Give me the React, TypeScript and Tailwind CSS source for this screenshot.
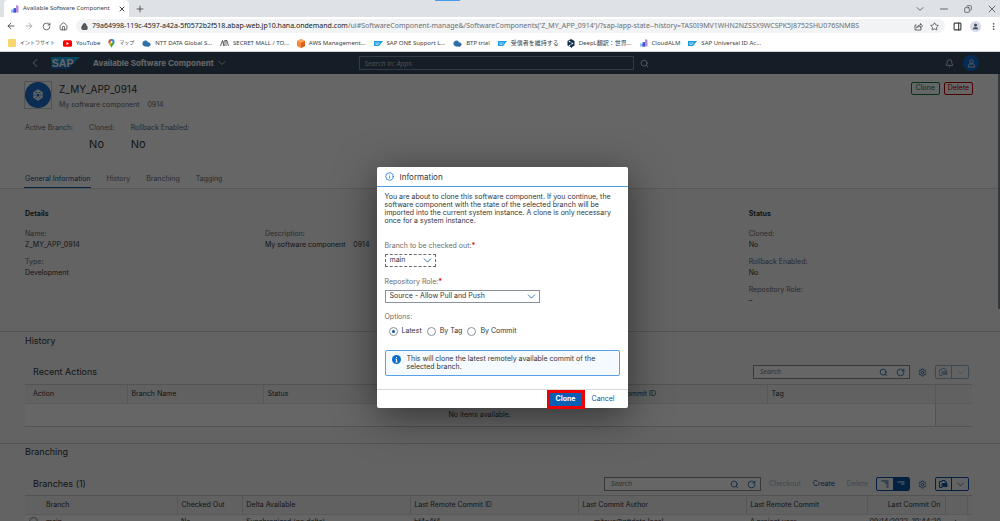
import type { ReactNode } from 'react';
import {
  ArrowLeft, ArrowRight, Bell, ChevronDown, ChevronLeft, ChevronRight, Cloud, Copy, EllipsisVertical,
  House, Info, Lock, Minus, PanelRight, Plus, RotateCw, Search, Settings, Star, User, X,
} from 'lucide-react';

const APP_FONT = "font-['Inter','Liberation_Sans',sans-serif]";
const CHROME_FONT = "font-['Noto_Sans','Noto_Sans_CJK_JP',sans-serif]";
const HINT_FONT = "font-['Open_Sans',sans-serif] italic";

function AlmIcon() {
  return (
    <svg viewBox="0 0 16 16" className="size-2 shrink-0">
      <path d="M0 9h5v6H0z" fill="#7cc4f5" />
      <path d="M5 6h5v9H5z" fill="#3f7fe0" />
      <path d="M10 0l5 2v13h-5z" fill="#b48be0" />
      <path d="M5 10l5-4v9H5z" fill="#4b4fc9" />
    </svg>
  );
}

function SapFlag() {
  return (
    <svg viewBox="0 0 18 10" className="h-[5px] w-[9px] shrink-0">
      <path d="M0 0h18l-8 10H0z" fill="#1a9be0" />
      <path d="M2 4h10M3 7h6" stroke="#fff" strokeWidth="1.2" />
    </svg>
  );
}

function CloudIcon() {
  return <Cloud className="size-[9px] shrink-0 fill-[#2f6fa8] text-[#2f6fa8]" />;
}

const BOOKMARKS: { label: string; icon: ReactNode; kana?: boolean }[] = [
  { label: 'イントラサイト', kana: true, icon: <span className="size-2 shrink-0 rounded-[1px] bg-[#f8d66d]" /> },
  {
    label: 'YouTube',
    icon: (
      <svg viewBox="0 0 18 13" className="h-[7px] w-[9px] shrink-0">
        <rect width="18" height="13" rx="3" fill="#f00" />
        <path d="M7 3.5v6l5-3z" fill="#fff" />
      </svg>
    ),
  },
  {
    label: 'マップ',
    kana: true,
    icon: (
      <svg viewBox="0 0 14 18" className="h-[9px] w-[7px] shrink-0">
        <path d="M7 18C6 13 1 11 1 6a6 6 0 0 1 12 0c0 5-5 7-6 12z" fill="#34a853" />
        <path d="M1 6a6 6 0 0 1 4-5.600L7 6 2 9z" fill="#ea4335" />
        <path d="M5 .4A6 6 0 0 1 13 6L7 6z" fill="#4285f4" />
        <path d="M2 9l5-3 1 2-4 5z" fill="#fbbc04" />
        <circle cx="7" cy="6" r="2" fill="#fff" />
      </svg>
    ),
  },
  { label: 'NTT DATA Global S...', icon: <CloudIcon /> },
  {
    label: 'SECRET MALL / TO...',
    icon: (
      <svg viewBox="0 0 18 12" className="h-[6px] w-[9px] shrink-0" fill="none" stroke="#333" strokeWidth="1.500">
        <path d="M1 12L5 1l3 11M8 12V2l4-1v11M12 1h2l3 11" />
      </svg>
    ),
  },
  {
    label: 'AWS Management...',
    icon: (
      <svg viewBox="0 0 16 18" className="h-[9px] w-2 shrink-0">
        <path d="M8 0l8 4v10l-8 4-8-4V4z" fill="#f58536" />
        <path d="M8 0l8 4-8 4-8-4z" fill="#fba55c" />
        <path d="M8 8l8-4v10l-8 4z" fill="#dd5f1c" />
      </svg>
    ),
  },
  { label: 'SAP ONE Support L...', icon: <SapFlag /> },
  { label: 'BTP trial', icon: <CloudIcon /> },
  { label: '受信者を維持する', icon: <SapFlag /> },
  {
    label: 'DeepL翻訳：世界...',
    icon: (
      <svg viewBox="0 0 16 18" className="h-[9px] w-2 shrink-0">
        <path d="M8 0l7 4v9l-5 3v2l-3-2-6-3V4z" fill="#0f2b46" />
        <path d="M5 5l6 4-6 4" fill="none" stroke="#fff" />
        <circle cx="5" cy="5" r="1.500" fill="#fff" />
        <circle cx="11" cy="9" r="1.500" fill="#fff" />
        <circle cx="5" cy="13" r="1.500" fill="#fff" />
      </svg>
    ),
  },
  { label: 'CloudALM', icon: <AlmIcon /> },
  { label: 'SAP Universal ID Ac...', icon: <SapFlag /> },
];

function BrowserChrome() {
  return (
    <div className={`flex-none bg-white text-[6px] text-[#3c4043] ${CHROME_FONT}`}>
      <div className="flex h-[17px] items-stretch bg-[#dee1e6]">
        <div className="ml-1 flex w-[125px] items-center rounded-t bg-white pr-[3px] pl-[7px]">
          <AlmIcon />
          <span className="ml-1 flex-1 whitespace-nowrap">Available Software Component</span>
          <button aria-label="Close tab"><X className="size-2" strokeWidth={3} /></button>
        </div>
        <button aria-label="New tab" className="ml-[6px]"><Plus className="size-[10px]" /></button>
        <div className="flex-1 pl-[29%]">
          <div className="h-px w-[25px] bg-[#4a9be8]" />
        </div>
        <div className="flex items-center gap-3 pr-[2px]">
          <button aria-label="Search tabs"><ChevronDown className="size-3" strokeWidth={1.5} /></button>
          <button aria-label="Minimize"><Minus className="size-3" strokeWidth={1.5} /></button>
          <button aria-label="Restore"><Copy className="mx-[2px] size-2 -scale-x-100" /></button>
          <button aria-label="Close"><X className="size-3" strokeWidth={1.5} /></button>
        </div>
      </div>

      <div className="flex h-[18px] items-center gap-2 pr-[2px] pl-[6px]">
        <button aria-label="Back"><ArrowLeft className="size-[10px]" /></button>
        <button aria-label="Forward"><ArrowRight className="size-[10px] text-[#a0a3a7]" /></button>
        <button aria-label="Reload"><RotateCw className="size-[9px]" /></button>
        <button aria-label="Home"><House className="size-[9px]" /></button>
        <div className="flex h-[14px] min-w-0 flex-1 items-center gap-1 rounded-full bg-[#f1f3f4] pr-[6px] pl-[5px]">
          <Lock className="size-[7px] shrink-0 fill-[#5f6368]" strokeWidth={3} />
          <span className="flex-1 overflow-hidden text-[7px] whitespace-nowrap text-[#6b6f74]">
            <span className="text-[#202124]">79a64998-119c-4597-a42a-5f0572b2f518.abap-web.jp10.hana.ondemand.com</span>
            /ui#SoftwareComponent-manage&amp;/SoftwareComponents('Z_MY_APP_0914')/?sap-iapp-state--history=TAS0I9MV1WHN2NZSSX9WCSPK5J8752SHU076SNMBS
          </span>
          <svg viewBox="0 0 18 18" className="size-[9px] shrink-0" fill="none" stroke="currentColor" strokeWidth="1.500">
            <path d="M5 6H2v10h12v-4M5 12c1-4 4-6 8-6V3l4 5-4 4V9c-4 0-6 1-8 3z" />
          </svg>
          <Star className="ml-[3px] size-[9px] shrink-0" />
        </div>
        <button aria-label="Side panel"><PanelRight className="size-[9px]" strokeWidth={3} /></button>
        <button aria-label="Profile" className="flex size-[11px] items-center justify-center rounded-full bg-[#d5dbe8]">
          <User className="size-[7px] fill-[#3c4a66]" />
        </button>
        <button aria-label="Menu"><EllipsisVertical className="size-[9px]" /></button>
      </div>

      <div className="flex h-[17px] items-center gap-2 border-b border-[#d0d3d7] px-2">
        {BOOKMARKS.map(b => (
          <a key={b.label} href="#" className="flex items-center gap-1 whitespace-nowrap">
            {b.icon}
            <span className={b.kana ? 'text-[5px]' : ''}>{b.label}</span>
          </a>
        ))}
      </div>
    </div>
  );
}

function ShellBar() {
  return (
    <header className="flex h-[22px] items-center bg-[#354a5f] pr-3 text-white">
      <div className="flex flex-1 items-center pl-7">
        <button aria-label="Back"><ChevronLeft className="size-[14px]" strokeWidth={1.5} /></button>
        <svg viewBox="0 0 62 26" className="ml-2 h-3 w-[31px]">
          <defs>
            <linearGradient id="sap" x1="0" y1="0" x2="0" y2="1">
              <stop offset="0" stopColor="#00b8f1" />
              <stop offset="1" stopColor="#1f5fbb" />
            </linearGradient>
          </defs>
          <path d="M0 0h62L37 26H0z" fill="url(#sap)" />
          <text x="1" y="22" fontSize="23" fontWeight="700" fill="#fff" fontFamily="Liberation Sans">SAP</text>
        </svg>
        <button className="ml-3 flex items-center gap-[2px] text-[8px] font-bold whitespace-nowrap">
          Available Software Component
          <ChevronDown className="size-3" strokeWidth={1.5} />
        </button>
      </div>
      <div className="flex items-center">
        <input
          aria-label="Search in: Apps"
          placeholder="Search in: Apps"
          className={`h-[14px] w-[275px] border border-[#7d93a8] px-[5px] text-[7px] placeholder:text-[#c3ccd5] ${HINT_FONT}`}
        />
        <button aria-label="Search" className="ml-[6px]"><Search className="size-[9px]" /></button>
      </div>
      <div className="flex flex-1 items-center justify-end gap-[9px] pr-[9px]">
        <button aria-label="Notifications"><Bell className="size-[9px]" /></button>
        <button aria-label="User" className="flex size-4 items-center justify-center rounded-full bg-[#0a6ed1]">
          <svg viewBox="0 0 18 18" className="size-[9px]" fill="none" stroke="#fff" strokeWidth="1.500">
            <circle cx="9" cy="5" r="3.500" />
            <path d="M3 16v-3c0-2 1-3 3-3h6c2 0 3 1 3 3v3z" />
          </svg>
        </button>
      </div>
    </header>
  );
}

function Field({ label, value }: { label: string; value: string }) {
  return (
    <div className="mb-[6px] leading-[11px]">
      <p className="text-[#6a6d70]">{label}</p>
      <p className="whitespace-pre">{value}</p>
    </div>
  );
}

function ObjectHeader() {
  return (
    <div className="border-b border-[#d9d9d9] bg-white pr-[27px] pl-[25px]">
      <div className="flex pt-2">
        <div className="size-[26px] outline outline-[#ccc]">
          <div className="flex size-full items-center justify-center rounded-full bg-[#1c6fd0]">
            <svg viewBox="0 0 24 24" fill="none" stroke="#fff" strokeWidth="2.500" className="size-3">
              <path d="M12 2l8 5v10l-8 5-8-5V7zM12 8l4 2v5l-4 2-4-2v-5zM12 2v6M4 7l4 3M20 7l-4 3M12 22v-5M4 17l4-2M20 17l-4-2" />
            </svg>
          </div>
        </div>
        <div className="ml-2 flex-1">
          <h1 className="text-[10px] leading-[14px]">Z_MY_APP_0914</h1>
          <p className="mt-1 text-[7px] leading-[10px] whitespace-pre text-[#6a6d70]">My software component    0914</p>
        </div>
        <div className="flex h-[13px] gap-1 text-[7px]">
          <button className="rounded-[2px] border border-[#107e3e] px-1 text-[#107e3e]">Clone</button>
          <button className="rounded-[2px] border border-[#bb0000] px-[3px] text-[#bb0000]">Delete</button>
        </div>
      </div>
      <div className="mt-3 flex h-10 gap-4 leading-[12px] text-[#6a6d70]">
        <p>Active Branch:</p>
        <div>
          <p>Cloned:</p>
          <p className="mt-[3px] text-[11px] leading-[14px] text-[#32363a]">No</p>
        </div>
        <div>
          <p>Rollback Enabled:</p>
          <p className="mt-[3px] text-[11px] leading-[14px] text-[#32363a]">No</p>
        </div>
      </div>
      <nav className="mt-2 flex h-[18px] gap-4 leading-[17px] text-[#6a6d70]">
        <a href="#" className="-mx-px border-b border-[#0854a0] px-px text-[#0854a0]">General Information</a>
        <a href="#">History</a>
        <a href="#">Branching</a>
        <a href="#">Tagging</a>
      </nav>
    </div>
  );
}

function TableSearch({ id }: { id: string }) {
  return (
    <div className="flex h-[14px] w-[157px] items-center border border-[#89919a] bg-white pr-1 pl-[6px] text-[#0854a0]">
      <input
        id={id}
        aria-label="Search"
        placeholder="Search"
        className={`min-w-0 flex-1 placeholder:text-[#6a6d70] ${HINT_FONT}`}
      />
      <button aria-label="Run search"><Search className="size-[9px]" /></button>
      <button aria-label="Refresh" className="ml-2"><RotateCw className="size-[9px]" /></button>
    </div>
  );
}

function ExportButton({ disabled = false }: { disabled?: boolean }) {
  return (
    <div className={`flex h-[14px] rounded-[2px] border border-[#0854a0] text-[#0854a0] ${disabled ? 'opacity-40' : ''}`}>
      <button aria-label="Export" disabled={disabled} className="flex w-4 items-center justify-center border-r border-[#0854a0]">
        <svg viewBox="0 0 18 18" className="size-[9px]">
          <path d="M1 3h5V1h6v3h3v3H6v8H1z" fill="none" stroke="currentColor" strokeWidth="2" />
          <path d="M7 7h10v7H7z" fill="currentColor" />
        </svg>
      </button>
      <button aria-label="Export options" disabled={disabled} className="flex w-4 items-center justify-center">
        <ChevronDown className="size-[11px]" strokeWidth={1.5} />
      </button>
    </div>
  );
}

const TH = 'border-r border-[#d9d9d9] pl-1 text-left font-normal whitespace-nowrap last:border-r-0';

function HistorySection() {
  return (
    <section className="border-t border-[#d0d0d0] pr-7 pl-[25px]">
      <h2 className="pt-[2px] text-[9px] leading-[14px]">History</h2>
      <div className="mt-[17px] flex h-[14px] items-center pr-[3px] pl-2">
        <h3 className="flex-1 text-[9px]">Recent Actions</h3>
        <TableSearch id="history-search" />
        <button aria-label="Settings" className="mx-2 text-[#0854a0]"><Settings className="size-[9px]" /></button>
        <ExportButton disabled />
      </div>
      <table className="mt-[5px] w-full table-fixed border-y border-[#d0d0d0]">
        <colgroup>
          <col className="w-[102px]" />
          <col className="w-[136px]" />
          <col />
          <col className="w-[150px]" />
          <col className="w-[168px]" />
          <col className="w-[37px]" />
        </colgroup>
        <thead>
          <tr className="h-[19px] border-b border-[#e0e0e0] bg-[#f2f2f2]">
            <th className="border-r border-[#d9d9d9] pl-2 text-left font-normal">Action</th>
            <th className={TH}>Branch Name</th>
            <th className={TH}>Status</th>
            <th className={TH}>Commit ID</th>
            <th className={TH}>Tag</th>
            <th className={TH} aria-label="Scrollbar" />
          </tr>
        </thead>
        <tbody>
          <tr className="h-[23px] bg-white text-center">
            <td colSpan={5} className="border-r border-[#d0d0d0]">No items available.</td>
            <td className="bg-[#f7f7f7]" />
          </tr>
        </tbody>
      </table>
    </section>
  );
}

function BranchingSection() {
  return (
    <section className="mt-4 border-t border-[#d0d0d0] pr-7 pl-[25px]">
      <h2 className="pt-px text-[9px] leading-[14px]">Branching</h2>
      <div className="mt-[18px] flex h-[14px] items-center pr-[3px] pl-2">
        <h3 className="flex-1 text-[9px]">Branches (1)</h3>
        <TableSearch id="branch-search" />
        <button disabled className="ml-2 text-[#0854a0] opacity-40">Checkout</button>
        <button className="ml-3 text-[#0854a0]">Create</button>
        <button disabled className="ml-3 text-[#0854a0] opacity-40">Delete</button>
        <div className="ml-2 flex h-[14px] overflow-hidden rounded-[2px] border border-[#0854a0] text-[#0854a0]">
          <button aria-label="Show details" className="flex w-4 items-center justify-center">
            <svg viewBox="0 0 16 16" className="size-2" fill="none" stroke="currentColor" strokeWidth="2">
              <path d="M1 2h14M8 6h7M11 10h4M11 14h4" />
            </svg>
          </button>
          <button aria-label="Hide details" className="flex w-4 items-center justify-center bg-[#0854a0] text-white">
            <svg viewBox="0 0 16 16" className="size-2" fill="none" stroke="currentColor" strokeWidth="2">
              <path d="M1 4h14M8 8h7" />
            </svg>
          </button>
        </div>
        <button aria-label="Settings" className="mx-2 text-[#0854a0]"><Settings className="size-[9px]" /></button>
        <ExportButton />
      </div>
      <table className="mt-1 w-full table-fixed border-t border-[#d0d0d0]">
        <colgroup>
          <col className="w-[152px]" />
          <col className="w-[65px]" />
          <col className="w-[168px]" />
          <col />
          <col className="w-[168px]" />
          <col className="w-[121px]" />
          <col className="w-[78px]" />
          <col className="w-[22px]" />
          <col className="w-[5px]" />
        </colgroup>
        <thead>
          <tr className="h-[19px] border-b border-[#e0e0e0] bg-[#f2f2f2]">
            <th className="border-r border-[#d9d9d9] pl-[21px] text-left font-normal">Branch</th>
            <th className={TH}>Checked Out</th>
            <th className={TH}>Delta Available</th>
            <th className={TH}>Last Remote Commit ID</th>
            <th className={TH}>Last Commit Author</th>
            <th className={TH}>Last Remote Commit</th>
            <th className="border-r border-[#d9d9d9] pr-1 text-right font-normal whitespace-nowrap">Last Commit On</th>
            <th className={TH} aria-label="Navigation" />
            <th className={TH} aria-label="Scrollbar" />
          </tr>
        </thead>
        <tbody>
          <tr className="h-[14px] bg-white">
            <td>
              <label className="flex items-center gap-2 pl-1">
                <input type="radio" name="branch" className="size-[9px] appearance-none rounded-full border border-[#89919a]" />
                main
              </label>
            </td>
            <td className="pl-1">No</td>
            <td className="pl-1">Synchronized (no delta)</td>
            <td className="pl-1">bf4e4f4</td>
            <td className="pl-4">mitsuo@nttdata.local</td>
            <td className="pl-1">A project user</td>
            <td className="pr-1 text-right whitespace-nowrap">09/14/2022, 10:44:20</td>
            <td><ChevronRight className="mx-auto size-2" /></td>
            <td className="bg-[#f7f7f7]" />
          </tr>
        </tbody>
      </table>
    </section>
  );
}

function InformationDialog() {
  return (
    <div role="dialog" aria-labelledby="dialog-title" className="w-[251px] rounded-[2px] bg-white shadow-[0_8px_40px_rgba(0,0,0,0.5)]">
      <div className="flex h-5 items-center gap-[6px] border-b border-[#4a9bea] px-2">
        <Info className="size-[9px] text-[#0a6ed1]" />
        <h2 id="dialog-title" className="text-[8px]">Information</h2>
      </div>
      <div className="px-2 pt-[6px] pb-[13px]">
        <p className="leading-[8px]">
          You are about to clone this software component. If you continue, the software component with the state of the
          selected branch will be imported into the current system instance. A clone is only necessary once for a system
          instance.
        </p>

        <label htmlFor="branch" className="mt-4 block leading-[10px] text-[#6a6d70]">
          Branch to be checked out:<span className="font-bold text-[#e00]">*</span>
        </label>
        <div className="relative mt-[3px] w-[51px]">
          <select id="branch" className="block h-[13px] w-full appearance-none border border-dashed border-[#6a6d70] bg-white px-1">
            <option>main</option>
          </select>
          <ChevronDown className="pointer-events-none absolute top-0 right-[2px] size-[13px] text-[#0854a0]" strokeWidth={1.5} />
        </div>

        <label htmlFor="role" className="mt-[10px] block leading-[10px] text-[#6a6d70]">
          Repository Role:<span className="font-bold text-[#e00]">*</span>
        </label>
        <div className="relative mt-[3px] w-[155px]">
          <select id="role" className="block h-[13px] w-full appearance-none border border-[#89919a] bg-white px-1">
            <option>Source - Allow Pull and Push</option>
          </select>
          <ChevronDown className="pointer-events-none absolute top-0 right-[2px] size-[13px] text-[#0854a0]" strokeWidth={1.5} />
        </div>

        <fieldset className="mt-[9px]">
          <legend className="leading-[10px] text-[#6a6d70]">Options:</legend>
          <div className="mt-1 flex gap-[5px] pl-1">
            {['Latest', 'By Tag', 'By Commit'].map((option, i) => (
              <label key={option} className="flex items-center gap-1 leading-[10px]">
                <input
                  type="radio"
                  name="option"
                  defaultChecked={i === 0}
                  className="size-[9px] appearance-none rounded-full border border-[#89919a] bg-white bg-clip-content p-[2px] checked:bg-[#0854a0]"
                />
                {option}
              </label>
            ))}
          </div>
        </fieldset>

        <div className="mt-[14px] flex gap-[6px] rounded-[2px] border border-[#5b9fe6] bg-[#f5faff] px-[6px] py-1 leading-[8px]">
          <svg viewBox="0 0 18 18" className="size-[9px] shrink-0">
            <circle cx="9" cy="9" r="9" fill="#0a6ed1" />
            <path d="M9 4v2M7 8h2v6M7 14h4" stroke="#fff" strokeWidth="2" fill="none" />
          </svg>
          <p>This will clone the latest remotely available commit of the selected branch.</p>
        </div>
      </div>
      <div className="flex h-[19px] items-center justify-end gap-[3px] border-t border-[#d9d9d9] pr-[9px]">
        <button className="h-[19px] w-[38px] border-[3px] border-[#f00000] bg-[#0a5fb5] font-bold text-white">Clone</button>
        <button className="px-1 text-[#0854a0]">Cancel</button>
      </div>
    </div>
  );
}

export default function App() {
  return (
    <div className="flex h-screen flex-col overflow-hidden">
      <BrowserChrome />
      <div className={`relative min-h-0 flex-1 overflow-hidden bg-[#f7f7f7] text-[7px] text-[#32363a] ${APP_FONT}`}>
        <ShellBar />
        <main>
          <ObjectHeader />
          <section className="flex h-[142px] gap-1 pt-[19px] pr-7 pl-[25px]">
            <div className="flex w-[76%]">
              <div className="w-1/3">
                <h2 className="mb-2 leading-[12px] font-bold">Details</h2>
                <Field label="Name:" value="Z_MY_APP_0914" />
                <Field label="Type:" value="Development" />
              </div>
              <div className="pt-[20px]">
                <Field label="Description:" value="My software component    0914" />
              </div>
            </div>
            <div>
              <h2 className="mb-2 leading-[12px] font-bold">Status</h2>
              <Field label="Cloned:" value="No" />
              <Field label="Rollback Enabled:" value="No" />
              <Field label="Repository Role:" value="–" />
            </div>
          </section>
          <HistorySection />
          <BranchingSection />
        </main>
        <div className="absolute top-[22px] right-0 h-[235px] w-[2px] bg-[#8a8d90]" />
        <div className="absolute inset-0 flex items-center justify-center bg-black/60 pt-[2px] pl-1">
          <InformationDialog />
        </div>
      </div>
    </div>
  );
}
